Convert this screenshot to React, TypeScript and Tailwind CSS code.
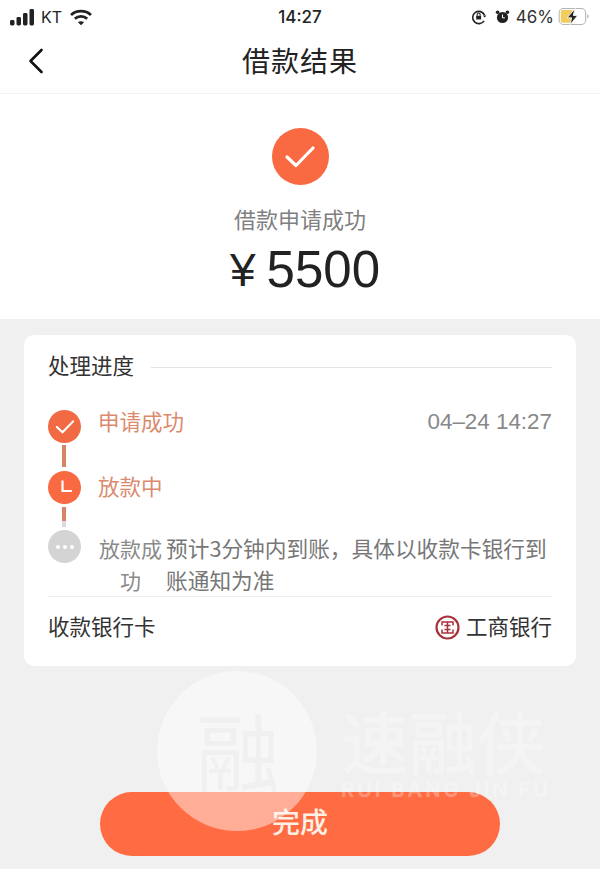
import React from 'react';

const cjk = "font-['Noto_Sans_CJK_SC','Noto_Sans',sans-serif]";

const StatusBar = () => (
  <div className="grid h-[33px] grid-cols-3 items-center pl-[10px] pr-[10px] pt-[1px] text-[#222]">
    <div className="flex items-center">
      <svg width="25" height="17" viewBox="0 0 25 17" fill="#222">
        <rect x="0" y="11" width="4.500" height="5.500" rx="1.400" />
        <rect x="6.500" y="8" width="4.500" height="8.500" rx="1.400" />
        <rect x="13" y="4" width="4.500" height="12.500" rx="1.400" />
        <rect x="19.500" y="0" width="4.500" height="16.500" rx="1.400" />
      </svg>
      <span className="ml-[6px] font-['Inter',sans-serif] text-[16px] leading-none">KT</span>
      <svg className="ml-[8px]" width="22" height="17" viewBox="0 0 21 16" fill="none" stroke="#222" strokeWidth="2.600">
        <path d="M1 5.600C6.200 .8 14.800 .8 20 5.600" />
        <path d="M4.600 9.200C7.800 6.300 13.200 6.300 16.400 9.200" />
        <path d="M10.500 15.500L7.600 12.600C9.200 11.300 11.800 11.300 13.400 12.600Z" fill="#222" stroke="none" />
      </svg>
    </div>
    <div className="text-center font-['Inter',sans-serif] text-[17px] font-medium leading-none">14:27</div>
    <div className="flex items-center justify-end">
      <svg width="16" height="16" viewBox="0 0 13 13" fill="none" stroke="#222" strokeWidth="1.300">
        <path d="M10.600 9.600A5 5 0 1 1 11 5" />
        <path d="M9.600 5.200h3l-1.500 1.800z" fill="#222" stroke="none" />
        <rect x="4.200" y="5.500" width="4" height="3" fill="#222" stroke="none" />
        <path d="M5 5.500V4.400a1.200 1.200 0 0 1 2.400 0v1.100" strokeWidth="0.900" />
      </svg>
      <svg className="ml-[8px]" width="15" height="16" viewBox="0 0 15 15" fill="#222">
        <circle cx="7.500" cy="8" r="5.600" />
        <circle cx="2.600" cy="2.800" r="1.800" />
        <circle cx="12.400" cy="2.800" r="1.800" />
        <path d="M7.500 5v3.400h2.400" fill="none" stroke="#fff" strokeWidth="1" />
      </svg>
      <span className="ml-[6px] font-['Inter',sans-serif] text-[17px] leading-none text-[#333]">46%</span>
      <svg className="ml-[4px]" width="32" height="18" viewBox="0 0 29 17">
        <rect x="0.500" y="0.500" width="25" height="15" rx="4" fill="none" stroke="#b5b5b5" />
        <rect x="2" y="2" width="12" height="12" rx="2" fill="#f0cd5c" />
        <path d="M27 6v4c.9-.3 1.400-1 1.400-2s-.5-1.700-1.400-2z" fill="#b5b5b5" />
        <path d="M15.500 0.500L8 9.300h4.300L10.800 15.800 18 7h-4.200z" fill="#222" stroke="#fff" strokeWidth="0.800" />
      </svg>
    </div>
  </div>
);

const Check = ({ size, sw }: { size: number; sw: number }) => (
  <svg width={size} height={size} viewBox="0 0 32 32" fill="none" stroke="#fff" strokeWidth={sw} strokeLinecap="round" strokeLinejoin="round">
    <path d="M3 16l9 8.500L29 7" />
  </svg>
);

const Watermark = () => (
  <div className="pointer-events-none absolute left-[157px] top-[671px] flex items-start">
    <div className={`flex h-[160px] w-[160px] items-center justify-center rounded-full bg-white/45 pb-[4px] pl-[2px] text-[84px] leading-none text-[#f0f0f0] ${cjk}`}>
      融
    </div>
    <div className="ml-[24px] mt-[35px] flex flex-col">
      <div className={`text-[68px] font-medium leading-[68px] text-white/30 ${cjk}`}>速融侠</div>
      <div className="mt-[6px] whitespace-nowrap font-['Inter',sans-serif] text-[20px] font-bold leading-none tracking-[3px] text-white/30">RUI BANG JIN FU</div>
    </div>
  </div>
);

export default function App() {
  return (
    <div className={`relative h-[869px] w-[600px] overflow-hidden bg-[#f0f0f0] ${cjk}`}>
      <div className="bg-white">
        <StatusBar />
        <div className="relative flex h-[61px] items-center justify-center border-b border-[#f2f2f2] pb-[6px]">
          <svg className="absolute left-[27px] top-[15px]" width="18" height="26" viewBox="0 0 18 26" fill="none" stroke="#111" strokeWidth="2.600" strokeLinecap="round" strokeLinejoin="round">
            <path d="M14.500 2L3.500 13l11 11" />
          </svg>
          <div className="text-[28px] leading-none tracking-[1px] text-[#222]">借款结果</div>
        </div>
        <div className="flex h-[225px] flex-col items-center pt-[34px]">
          <div className="flex h-[57px] w-[57px] items-center justify-center rounded-full bg-[#f96a43]">
            <Check size={32} sw={3.200} />
          </div>
          <div className="mt-[19px] text-[22px] leading-[28px] text-[#808080]">借款申请成功</div>
          <div className="mt-[12px] flex items-center pl-[10px] font-['Liberation_Sans',sans-serif] text-[51px] leading-[52px] text-[#222]">
            <span className="mr-[11px] text-[46px]">¥</span>5500
          </div>
        </div>
      </div>

      <div className="px-6 pt-4">
        <div className="h-[331px] rounded-[10px] bg-white px-6 pt-[14px]">
          <div className="flex h-[32px] items-center">
            <span className="text-[21.500px] leading-none text-[#333]">处理进度</span>
            <div className="ml-[17px] mt-[4px] h-px flex-1 bg-[#e4e4e4]" />
          </div>

          <div className="mt-[29px] flex items-start">
            <div className="flex w-[50px] shrink-0 flex-col items-start">
              <div className="flex h-[33px] w-[33px] items-center justify-center rounded-full bg-[#f26a44]">
                <Check size={20} sw={3.400} />
              </div>
              <div className="ml-[14px] mt-[2px] h-[22px] w-[4px] bg-[#d9826a]" />
              <div className="mt-[4px] flex h-[33px] w-[33px] items-center justify-center rounded-full bg-[#f96a43]">
                <svg width="18" height="18" viewBox="0 0 18 18" fill="none" stroke="#fff" strokeWidth="2.200">
                  <path d="M6.500 1.500V12H16" />
                </svg>
              </div>
              <div className="ml-[14px] mt-[3px] h-[14px] w-[4px] bg-[#d9826a]" />
              <div className="ml-[14px] h-[6px] w-[4px] bg-[#dcdcdc]" />
              <div className="mt-[3px] flex h-[33px] w-[33px] items-center justify-center gap-[3px] rounded-full bg-[#d4d4d4]">
                <span className="h-[4px] w-[4px] rounded-full bg-white" />
                <span className="h-[4px] w-[4px] rounded-full bg-white" />
                <span className="h-[4px] w-[4px] rounded-full bg-white" />
              </div>
            </div>

            <div className="mt-[-3px] flex-1">
              <div className="flex h-[28px] items-center justify-between">
                <span className="text-[21.500px] leading-none text-[#dc8a6e]">申请成功</span>
                <span className="pt-[3px] font-['Liberation_Sans',sans-serif] text-[22.400px] leading-none text-[#888]">04–24 14:27</span>
              </div>
              <div className="mt-[37px] flex h-[28px] items-center">
                <span className="text-[21.500px] leading-none text-[#d98a6f]">放款中</span>
              </div>
              <div className="mt-[32px] flex leading-[32px]">
                <div className="w-[65px] shrink-0 text-center text-[21px] text-[#8a8a8a]">放款成功</div>
                <div className="ml-[3px] flex-1 text-[21.700px] text-[#777]">预计3分钟内到账，具体以收款卡银行到账通知为准</div>
              </div>
            </div>
          </div>

          <div className="flex h-[58px] items-center justify-between border-t border-[#eeeeee]">
            <span className="text-[21.500px] leading-none text-[#333]">收款银行卡</span>
            <div className="flex items-center">
              <svg className="mr-[1px] mt-[3px]" width="25" height="25" viewBox="0 0 25 25" fill="none" stroke="#a8323a">
                <circle cx="12.500" cy="12.500" r="11" strokeWidth="2.200" />
                <path d="M7 10.500V7h11v3.500M7 14.500V18h11v-3.500M9.500 10.500h6M9.500 14.500h6M12.500 7v11" strokeWidth="1.500" />
              </svg>
              <span className="ml-[5px] text-[21.500px] leading-none text-[#333]">工商银行</span>
            </div>
          </div>
        </div>
      </div>

      <div className="mt-[126px] flex justify-center">
        <button className="flex h-[64px] w-[400px] items-center justify-center rounded-full bg-[#ff6b42] pb-[6px] text-[28px] font-medium text-[#fdf1e6]">
          完成
        </button>
      </div>

      <Watermark />
    </div>
  );
}
